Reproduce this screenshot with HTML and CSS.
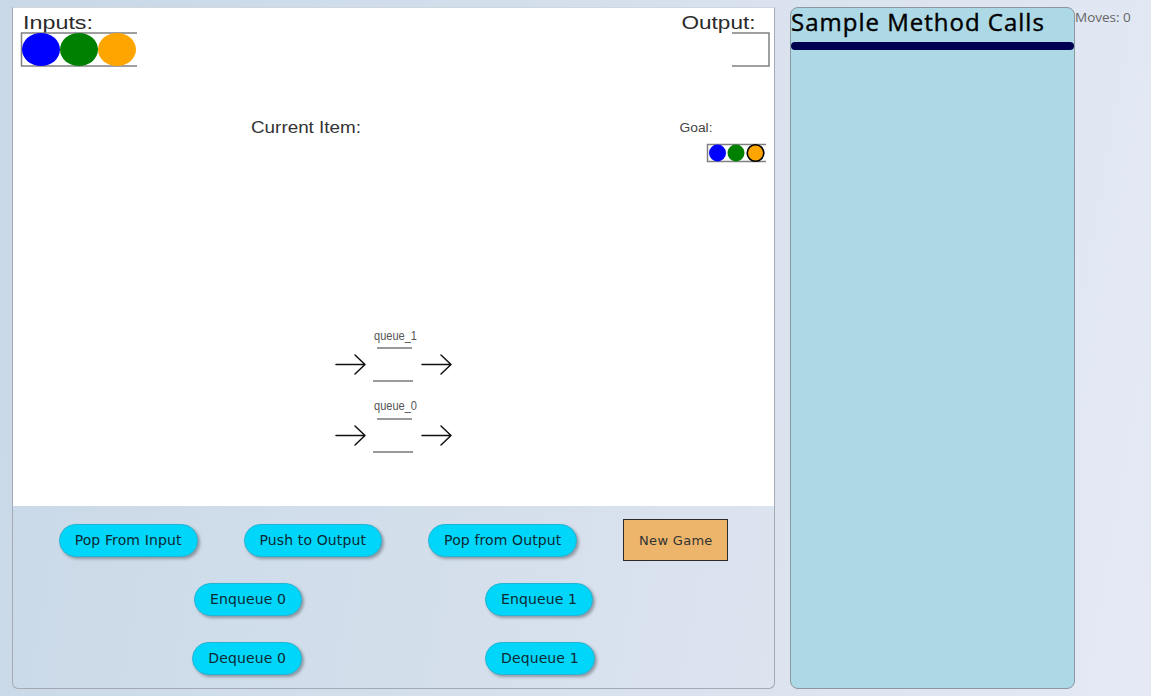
FILE: index.html
```html
<!DOCTYPE html>
<html>
<head>
<meta charset="utf-8">
<link rel="stylesheet" href="styles.css">
</head>
<body>
<div class="game">
  <svg class="board" width="761" height="498" viewBox="0 0 761 498" xmlns="http://www.w3.org/2000/svg">
    <text class="big" x="10" y="21" textLength="70" lengthAdjust="spacingAndGlyphs">Inputs:</text>
    <path class="box" d="M124 25 H8.5 V58 H124"/>
    <ellipse cx="28" cy="41.5" rx="19" ry="16.5" fill="#0000ff"/>
    <ellipse cx="66" cy="41.5" rx="19" ry="16.5" fill="#008000"/>
    <ellipse cx="104" cy="41.5" rx="19" ry="16.5" fill="#ffa500"/>

    <text class="big" x="668.5" y="21" textLength="74" lengthAdjust="spacingAndGlyphs">Output:</text>
    <path class="box" d="M719 25 H756 V58 H719"/>

    <text class="mid" x="238" y="124.5" textLength="110" lengthAdjust="spacingAndGlyphs">Current Item:</text>

    <text class="small" x="666.5" y="124" textLength="33" lengthAdjust="spacingAndGlyphs">Goal:</text>
    <path class="box" d="M753 136.5 H694.5 V153.5 H753"/>
    <circle cx="704.5" cy="145" r="8.5" fill="#0000ff"/>
    <circle cx="723" cy="145" r="8.5" fill="#008000"/>
    <circle cx="742.5" cy="145" r="8.3" fill="#ffa500" stroke="#000" stroke-width="1.6"/>

    <text class="qlabel" x="361" y="332" textLength="43" lengthAdjust="spacingAndGlyphs">queue_1</text>
    <path class="qline" d="M364 340 H399 M360 373 H400"/>
    <path class="arrow" d="M323 356.5 H352 M342 347 L352 356.5 L342 366"/>
    <path class="arrow" d="M409 356.5 H438 M428 347 L438 356.5 L428 366"/>

    <text class="qlabel" x="361" y="402" textLength="43" lengthAdjust="spacingAndGlyphs">queue_0</text>
    <path class="qline" d="M364 411 H399 M360 444 H400"/>
    <path class="arrow" d="M323 427.5 H352 M342 418 L352 427.5 L342 437"/>
    <path class="arrow" d="M409 427.5 H438 M428 418 L438 427.5 L428 437"/>
  </svg>
  <div class="controls">
    <div class="row row-wide">
      <button class="pill">Pop From Input</button>
      <button class="pill">Push to Output</button>
      <button class="pill">Pop from Output</button>
      <button class="newgame">New Game</button>
    </div>
    <div class="row row-pair">
      <button class="pill">Enqueue 0</button>
      <button class="pill">Enqueue 1</button>
    </div>
    <div class="row row-pair">
      <button class="pill">Dequeue 0</button>
      <button class="pill">Dequeue 1</button>
    </div>
  </div>
</div>
<div class="side">
  <h2 class="side-title">Sample Method Calls</h2>
  <div class="side-bar"></div>
</div>
<div class="moves">Moves: 0</div>
</body>
</html>
```
FILE: styles.css
```css
html, body {
  margin: 0;
  height: 100%;
}
body {
  box-sizing: border-box;
  padding: 7px 0 0 12px;
  display: flex;
  align-items: flex-start;
  gap: 15px;
  background: linear-gradient(100deg, #c8d8e7 0%, #d6e0ec 50%, #e4e9f5 100%);
  font-family: "DejaVu Sans", Verdana, sans-serif;
  overflow: hidden;
}
.game {
  box-sizing: border-box;
  width: 763px;
  height: 682px;
  border: 1px solid #a3aab3;
  border-top-color: #d0d6de;
  border-radius: 0 0 6px 6px;
  display: flex;
  flex-direction: column;
  flex-shrink: 0;
}
.board {
  display: block;
  background: #ffffff;
  flex-shrink: 0;
}
.board text {
  font-family: "Liberation Sans", Arial, sans-serif;
}
.board .big { font-size: 19px; fill: #2a2a2a; }
.board .mid { font-size: 16px; fill: #333333; }
.board .small { font-size: 12px; fill: #444444; }
.board .qlabel { font-size: 12px; fill: #555555; }
.board .box { fill: none; stroke: #808080; stroke-width: 1.5; }
.board .qline { fill: none; stroke: #9a9a9a; stroke-width: 2; }
.board .arrow { fill: none; stroke: #111111; stroke-width: 1.5; stroke-linecap: round; stroke-linejoin: round; }

.controls {
  flex: 1;
  padding-top: 13px;
  display: flex;
  flex-direction: column;
  gap: 17px;
}
.row {
  height: 42px;
  display: flex;
  align-items: center;
  justify-content: center;
}
.row-wide { gap: 46px; }
.row-pair { gap: 183px; }
.pill {
  height: 33px;
  padding: 0 15px;
  border: 1px solid #22b4d4;
  border-radius: 17px;
  background: #00d5fa;
  color: #0c2a33;
  font-family: "DejaVu Sans", Verdana, sans-serif;
  font-size: 14px;
  letter-spacing: 0.12px;
  box-shadow: 2px 2px 3px rgba(60, 70, 80, 0.45);
  white-space: nowrap;
}
.newgame {
  box-sizing: border-box;
  height: 42px;
  width: 105px;
  padding: 0;
  border: 1px solid #2a2a2a;
  background: #edb56c;
  color: #333333;
  font-family: "DejaVu Sans", Verdana, sans-serif;
  font-size: 13px;
  letter-spacing: 0.3px;
}
.side {
  box-sizing: border-box;
  width: 285px;
  height: 682px;
  background: #add8e6;
  border: 1px solid #8c979e;
  border-radius: 8px;
  flex-shrink: 0;
}
.side-title {
  margin: 0;
  padding-left: 0;
  font-family: "Open Sans", sans-serif;
  font-weight: normal;
  font-size: 24px;
  line-height: 28px;
  letter-spacing: 1px;
  -webkit-text-stroke: 0.4px #000;
  color: #000000;
  white-space: nowrap;
}
.side-bar {
  margin-top: 6px;
  height: 8px;
  border-radius: 4px;
  background: #000050;
}
.moves {
  margin-top: 2px;
  margin-left: -15px;
  font-family: "Open Sans", sans-serif;
  font-size: 13.5px;
  line-height: 16px;
  color: #666666;
  white-space: nowrap;
}
```
